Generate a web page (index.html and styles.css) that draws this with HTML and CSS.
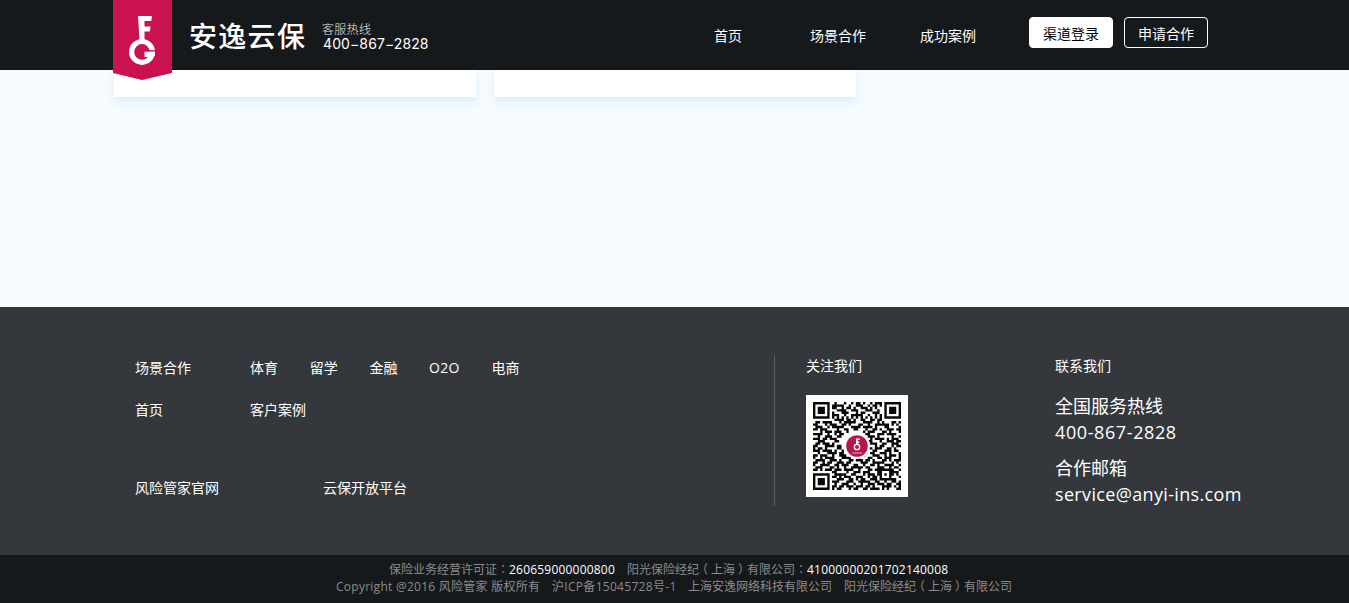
FILE: index.html
```html
<!DOCTYPE html>
<html lang="zh-CN">
<head>
<meta charset="utf-8">
<title>安逸云保</title>
<link rel="stylesheet" href="styles.css">
</head>
<body>
<header class="header">
  <svg class="ribbon" width="59" height="80" viewBox="0 0 59 80">
    <path fill="#c9124f" d="M0 0H59V73L29 80L0 73Z"/>
    <path fill="#fff" d="M25 16H39L38.300 21H31.500V26.500H37.500L36.800 31.500H31.500V40H26.500Z"/>
    <circle cx="29" cy="51.900" r="10.400" fill="none" stroke="#fff" stroke-width="5.200"/>
    <path fill="#c9124f" d="M35 50.200H43V51.700H35Z"/>
    <path fill="#fff" d="M31.500 51.700H42V56H36.300V57H31.500Z"/>
  </svg>
  <div class="brand">安逸云保</div>
  <div class="hotline"><span class="hotline-label">客服热线</span><span class="hotline-number">400−867−2828</span></div>
  <nav class="nav"><a>首页</a><a>场景合作</a><a>成功案例</a></nav>
  <div class="actions"><a class="button button-solid">渠道登录</a><a class="button">申请合作</a></div>
</header>
<main class="main"><div class="card"></div><div class="card"></div></main>
<footer class="footer">
  <div class="links">
    <div class="row"><a class="lead">场景合作</a><div class="topics"><a>体育</a><a>留学</a><a>金融</a><a class="o2o">O2O</a><a>电商</a></div></div>
    <div class="row"><a class="lead">首页</a><a>客户案例</a></div>
    <div class="row sites"><a class="site">风险管家官网</a><a>云保开放平台</a></div>
  </div>
  <section class="follow">
    <h3>关注我们</h3>
    <svg class="qr" width="102" height="102" viewBox="0 0 102 102">
      <path id="modules" fill="#080808"/>
      <circle cx="51" cy="51" r="13" fill="#fff"/>
      <circle cx="51" cy="51" r="10.800" fill="#b5164f"/>
      <path fill="#fff" d="M50 43.500H53.800V45H51.700V46.500H53.300V48H51.700V50H50Z"/>
      <circle cx="51" cy="52" r="2.700" fill="none" stroke="#fff" stroke-width="1.300"/>
      <path stroke="#e5a8bc" stroke-width="1" d="M46.500 58H56"/>
    </svg>
  </section>
  <section class="contact">
    <h3>联系我们</h3>
    <p>全国服务热线</p><p class="phone">400-867-2828</p>
    <p class="mail-label">合作邮箱</p><p class="mail">service@anyi-ins.com</p>
  </section>
</footer>
<div class="legal">
  <div class="licenses"><span>保险业务经营许可证<i lang="zh-TW">：</i><b>260659000000800</b></span><span>阳光保险经纪<i class="paren">（</i>上海<i class="paren">）</i>有限公司<i lang="zh-TW">：</i><b>41000000201702140008</b></span></div>
  <div class="copyright"><span class="c-owner">Copyright @2016 风险管家 版权所有</span><span class="c-icp">沪ICP备15045728号-1</span><span>上海安逸网络科技有限公司</span><span>阳光保险经纪<i class="paren">（</i>上海<i class="paren">）</i>有限公司</span></div>
</div>
<script src="qr.js"></script>
</body>
</html>
```

FILE: styles.css
```css
* { box-sizing: border-box; }
body { margin: 0; background: #f5fbff; color: #fff; font: 14px/20px "Open Sans", "Noto Sans CJK SC", sans-serif; }
a { white-space: nowrap; }
h3, p { margin: 0; font-weight: 400; }
h3 { font-size: 14px; line-height: 22px; }
.header { position: relative; z-index: 1; display: flex; height: 70px; padding-left: 113px; background: #16191c; }
.ribbon { flex: none; }
.brand { width: 133px; padding: 15px 0 0 17px; font: 500 28px/40px "Noto Sans CJK SC", sans-serif; letter-spacing: 1.3px; white-space: nowrap; }
.hotline { display: flex; flex-direction: column; width: 392px; padding: 22px 0 0 17px; }
.hotline-label { font: 300 12px/14px "Noto Sans CJK SC", sans-serif; letter-spacing: .3px; color: #e8e8e8; }
.hotline-number { padding-left: 1px; font: 14px/15px "Inter", sans-serif; letter-spacing: .1px; }
.nav { display: flex; padding: 26px 0 0 17px; }
.nav a { width: 110px; }
.nav a:first-child { width: 96px; }
.nav a:last-child { width: 109px; }
.actions { display: flex; gap: 11px; padding-top: 17px; }
.button { width: 84px; height: 31px; border: 1px solid #fff; border-radius: 4px; line-height: 32px; text-align: center; }
.button-solid { background: #fff; color: #000; }
.main { display: flex; gap: 18px; height: 237px; padding-left: 114px; }
.card { width: 362px; height: 27px; background: #fff; box-shadow: 0 5px 10px #deedf9; }
.footer { display: flex; height: 248px; padding: 48px 0 0 135px; background: #34373c; }
.links { display: flex; flex-direction: column; gap: 22px; width: 640px; height: 151px; padding-top: 3px; border-right: 1px solid #5b5d5f; }
.row { display: flex; }
.lead { width: 115px; }
.topics { display: flex; gap: 32px; }
.topics a { margin-right: -.3px; }
.o2o { letter-spacing: .3px; }
.sites { padding-top: 36px; }
.site { width: 188px; }
.follow { width: 280px; padding-left: 31px; }
.qr { display: block; margin-top: 18px; background: #fff; }
.contact p { font-size: 18px; line-height: 26px; white-space: nowrap; }
.contact h3 + p { margin-top: 16px; }
.contact .phone { letter-spacing: .6px; }
.contact .mail-label { margin-top: 10px; }
.contact .mail { letter-spacing: .34px; }
.legal { height: 48px; padding-top: 6px; background: #16191c; color: #8b8b8b; font-size: 12px; line-height: 17px; white-space: nowrap; }
.licenses, .copyright { display: flex; gap: 12px; height: 17px; }
.licenses { padding-left: 389px; }
.copyright { padding-left: 336px; }
.c-owner { width: 204px; letter-spacing: .26px; }
.c-icp { width: 124px; letter-spacing: .3px; }
.legal i { font-family: "Noto Sans CJK TC", sans-serif; font-style: normal; line-height: 1; }
.legal .paren { margin: 0 3px; font-feature-settings: "halt"; }
.legal b { color: #fff; font-weight: 400; letter-spacing: .2px; }
```

FILE: qr.js
```js
const rows = [
  "1111111001000100101101001011101111111",
  "1000001011111001001110010110101000001",
  "1011101011001011010011101010001011101",
  "1011101000111100111000111001001011101",
  "1011101010001110001011000111001011101",
  "1000001011100100111110010010101000001",
  "1111111010101010101010101010101111111",
  "0000000001111011010011001101100000000",
  "0110111100010111110001111001010001101",
  "1100010111001101000110010011111101010",
  "0111001011111000111101111010001100001",
  "1101110000100110011000100110100111011",
  "0001011101110010000001011100011010001",
  "1111001001011000000000110001110111100",
  "0010011100110000000000011101000001001",
  "1110110111000000000000001011110101110",
  "0011100001100000000000011000100111011",
  "0110111010000000000000001110011001110",
  "1100011110110000000000010010110001011",
  "1011010000110000000000011011100110100",
  "1110111101001000000000100110001110110",
  "0010001111011000000001101100111010001",
  "1101110010011100100111000111001011101",
  "1001011110001111001100011001101110001",
  "0111100111010001101110110100011010111",
  "1100101100111011000011100111110001010",
  "1001111001101110011001001101001111001",
  "0111000110100100111110110001110010110",
  "1101011101110111100100011011111111001",
  "0000000011000010011101110001100011110",
  "1111111001111100110001011101101011010",
  "1000001011010111001110010110100010001",
  "1011101000111001101011001110111111100",
  "1011101011100011100111110011001001101",
  "1011101001001110010010011101110110011",
  "1000001011011011101110110100011110101",
  "1111111010110001011001101111010100011"
];
const size = 88 / rows.length;
document.getElementById("modules").setAttribute("d", rows.flatMap((row, y) =>
  [...row].map((cell, x) => cell === "1" ? `M${7 + x * size} ${7 + y * size}h${size}v${size}h-${size}z` : "")
).join(""));
```
